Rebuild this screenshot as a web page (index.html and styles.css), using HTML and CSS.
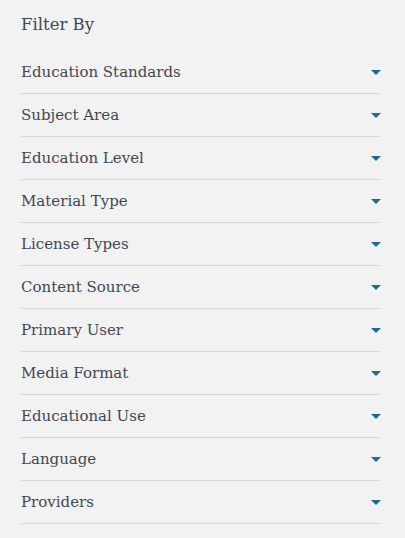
FILE: index.html
```html
<!doctype html>
<html>
<head>
<meta charset="utf-8">
<title>Filter By</title>
<link rel="stylesheet" href="styles.css">
</head>
<body>

<div id="filters">
<h2 class="title">Filter By</h2>

<div class="row"><span>Education Standards</span><i class="caret"></i></div>
<div class="row"><span>Subject Area</span><i class="caret"></i></div>
<div class="row"><span>Education Level</span><i class="caret"></i></div>
<div class="row"><span>Material Type</span><i class="caret"></i></div>
<div class="row"><span>License Types</span><i class="caret"></i></div>
<div class="row"><span>Content Source</span><i class="caret"></i></div>
<div class="row"><span>Primary User</span><i class="caret"></i></div>
<div class="row"><span>Media Format</span><i class="caret"></i></div>
<div class="row"><span>Educational Use</span><i class="caret"></i></div>
<div class="row"><span>Language</span><i class="caret"></i></div>
<div class="row"><span>Providers</span><i class="caret"></i></div>
</div>

</body>
</html>
```

FILE: styles.css
```css
body {
	margin: 0;
	background: #f1f2f1;
	font-family: "DejaVu Serif", "Liberation Serif", serif;
	color: #414855;
}

#filters {
	width: 359px;
	padding: 13px 0 0 21px;
}

.title {
	margin: 0 0 14px;
	font-size: 16.5px;
	font-weight: normal;
	line-height: 24px;
}

.row {
	display: flex;
	align-items: center;
	justify-content: space-between;
	height: 42px;
	border-bottom: 1px solid #d4d5d4;
	font-size: 15px;
}

.caret {
	width: 0;
	height: 0;
	margin-right: -1px;
	border-left: 5px solid transparent;
	border-right: 5px solid transparent;
	border-top: 5px solid #1b6b94;
}
```
